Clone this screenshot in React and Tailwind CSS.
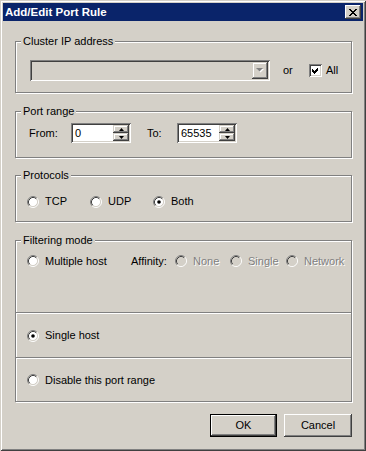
import React from 'react'

const raised = 'shadow-[inset_-1px_-1px_#404040,inset_1px_1px_#fff,inset_-2px_-2px_#808080]'
const raisedSoft = 'shadow-[inset_-1px_-1px_#404040,inset_1px_1px_#d4d0c8,inset_-2px_-2px_#808080,inset_2px_2px_#fff]'
const sunken = 'shadow-[inset_1px_1px_#808080,inset_-1px_-1px_#fff,inset_2px_2px_#404040,inset_-2px_-2px_#d4d0c8]'
const etched = 'border border-[#808080] shadow-[inset_1px_1px_#fff,1px_1px_#fff]'
const dim = 'text-[#808080] [text-shadow:1px_1px_0_#fff]'

function Radio({ checked, disabled }) {
  return (
    <svg width="12" height="12" viewBox="0 0 12 12" className="shrink-0">
      <circle cx="6" cy="6" r="4.5" fill={disabled ? '#d4d0c8' : '#fff'} />
      <path d="M9.89 2.11 A5.5 5.5 0 0 0 2.11 9.89" fill="none" stroke="#808080" />
      <path d="M9.89 2.11 A5.5 5.5 0 0 1 2.11 9.89" fill="none" stroke="#fff" />
      <path d="M9.18 2.82 A4.5 4.5 0 0 0 2.82 9.18" fill="none" stroke="#404040" />
      <path d="M9.18 2.82 A4.5 4.5 0 0 1 2.82 9.18" fill="none" stroke="#d4d0c8" />
      {checked && <circle cx="6" cy="6" r="1.8" fill="#000" />}
    </svg>
  )
}

function Option({ label, checked, disabled, className = '' }) {
  return (
    <div className={`flex items-center shrink-0 ${className}`}>
      <Radio checked={checked} disabled={disabled} />
      <span className={`ml-[6px] whitespace-nowrap ${disabled ? dim : ''}`}>{label}</span>
    </div>
  )
}

function Group({ label, className = '', children }) {
  return (
    <div className={`relative w-[337px] ${etched} ${className}`}>
      <span className="absolute left-[5px] top-[-7px] px-[2px] bg-[#d4d0c8] leading-[13px] whitespace-nowrap">{label}</span>
      {children}
    </div>
  )
}

function Spin({ value }) {
  return (
    <div className={`w-[60px] h-[20px] bg-white flex p-[2px] ${sunken}`}>
      <span className="flex-1 pl-[2px] flex items-center">{value}</span>
      <div className="w-[16px] flex flex-col">
        <div className={`h-[8px] bg-[#d4d0c8] flex items-center justify-center ${raisedSoft}`}>
          <svg width="5" height="3" viewBox="0 0 5 3"><path d="M2.5 0 L5 3 L0 3 Z" fill="#000" /></svg>
        </div>
        <div className={`h-[8px] bg-[#d4d0c8] flex items-center justify-center ${raisedSoft}`}>
          <svg width="5" height="3" viewBox="0 0 5 3"><path d="M0 0 L5 0 L2.5 3 Z" fill="#000" /></svg>
        </div>
      </div>
    </div>
  )
}

export default function App() {
  return (
    <div className="w-[366px] h-[451px] bg-[#d4d0c8] p-[3px] flex flex-col font-['Liberation_Sans',Arial,sans-serif] text-[11px] leading-[13px] text-black shadow-[inset_1px_1px_#d4d0c8,inset_-1px_-1px_#404040,inset_2px_2px_#fff,inset_-2px_-2px_#808080]">
      {/* title bar */}
      <div className="h-[18px] bg-[#0a246a] flex items-center pl-[2px] pr-[2px] shrink-0">
        <span className="text-white font-bold text-[11.5px]">Add/Edit Port Rule</span>
        <div className={`ml-auto w-[16px] h-[14px] bg-[#d4d0c8] flex items-center justify-center ${raised}`}>
          <svg width="8" height="7" viewBox="0 0 8 7" shapeRendering="crispEdges">
            <path d="M0 0h2v1H0zM6 0h2v1H6zM1 1h2v1H1zM5 1h2v1H5zM2 2h4v1H2zM3 3h2v1H3zM2 4h4v1H2zM1 5h2v1H1zM5 5h2v1H5zM0 6h2v1H0zM6 6h2v1H6z" fill="#000" />
          </svg>
        </div>
      </div>

      <div className="pl-[12px] flex flex-col">
        {/* cluster ip */}
        <Group label="Cluster IP address" className="mt-[20px] h-[52px]">
          <div className="flex items-center pl-[14px] pt-[18px]">
            <div className={`w-[240px] h-[21px] bg-[#d4d0c8] flex justify-end p-[2px] ${sunken}`}>
              <div className={`w-[16px] h-[17px] bg-[#d4d0c8] flex items-center justify-center ${raisedSoft}`}>
                <svg width="8" height="5" viewBox="0 0 8 5">
                  <path d="M1 1 L8 1 L4.5 4.5 Z" fill="#fff" />
                  <path d="M0 0 L7 0 L3.5 3.5 Z" fill="#808080" />
                </svg>
              </div>
            </div>
            <span className="ml-[13px] w-[26px]">or</span>
            <div className={`w-[13px] h-[13px] bg-white flex items-center justify-center ${sunken}`}>
              <svg width="13" height="13" viewBox="0 0 13 13" shapeRendering="crispEdges">
                <path d="M3 5 L5 7 L9 3 L9 6 L5 10 L3 8 Z" fill="#000" />
              </svg>
            </div>
            <span className="ml-[4px]">All</span>
          </div>
        </Group>

        {/* port range */}
        <Group label="Port range" className="mt-[18px] h-[47px]">
          <div className="flex items-center pl-[13px] pt-[11px]">
            <span className="w-[42px]">From:</span>
            <Spin value="0" />
            <span className="ml-[16px] w-[30px]">To:</span>
            <Spin value="65535" />
          </div>
        </Group>

        {/* protocols */}
        <Group label="Protocols" className="mt-[17px] h-[47px]">
          <div className="flex items-center h-[13px] pl-[11px] mt-[19px]">
            <Option label="TCP" className="w-[63px]" />
            <Option label="UDP" className="w-[63px]" />
            <Option label="Both" checked />
          </div>
        </Group>

        {/* filtering mode */}
        <Group label="Filtering mode" className="mt-[18px] h-[162px] flex flex-col">
          <div className="h-[71px] pl-[11px] pt-[13px] shrink-0">
            <div className="flex items-center h-[14px]">
              <Option label="Multiple host" className="w-[104px]" />
              <span className="w-[44px] shrink-0">Affinity:</span>
              <Option label="None" disabled className="w-[55px]" />
              <Option label="Single" disabled className="w-[56px]" />
              <Option label="Network" disabled />
            </div>
          </div>
          <div className="h-[2px] bg-white border-t border-[#808080] shrink-0" />
          <div className="h-[43px] flex items-center pl-[11px] shrink-0">
            <Option label="Single host" checked />
          </div>
          <div className="h-[2px] bg-white border-t border-[#808080] shrink-0" />
          <div className="flex-1 flex items-center pl-[11px]">
            <Option label="Disable this port range" />
          </div>
        </Group>

        {/* buttons */}
        <div className="mt-[12px] w-[337px] flex justify-end gap-[7px]">
          <div className="w-[67px] h-[23px] border border-black">
            <div className={`w-full h-full flex items-center justify-center ${raised}`}>OK</div>
          </div>
          <div className={`w-[68px] h-[23px] flex items-center justify-center ${raised}`}>Cancel</div>
        </div>
      </div>
    </div>
  )
}
